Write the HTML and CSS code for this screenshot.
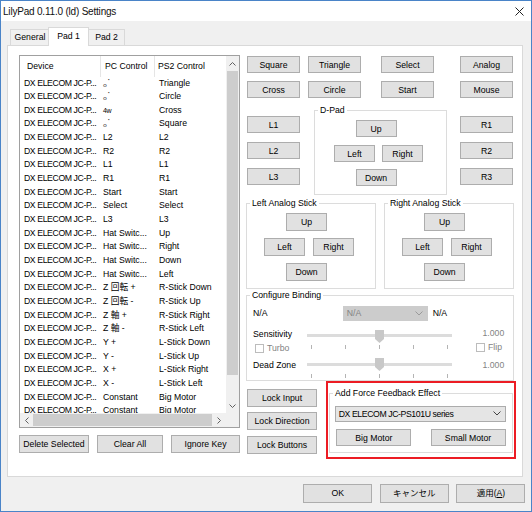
FILE: index.html
```html
<!DOCTYPE html>
<html lang="en">
<head>
  <meta charset="UTF-8">
  <title>LilyPad Settings</title>
  <link rel="stylesheet" href="styles.css">
</head>
<body>
<div class="window">
  <div class="titlebar">
    <span class="title">LilyPad 0.11.0 (ld) Settings</span>
    <svg class="close" width="9" height="9" viewBox="0 0 9 9"><path d="M0.5 0.5L8.5 8.5M8.5 0.5L0.5 8.5" stroke="#222" stroke-width="1"/></svg>
  </div>

  <div class="tabs">
    <div class="tab general">General</div>
    <div class="tab active">Pad 1</div>
    <div class="tab pad2">Pad 2</div>
  </div>

  <div class="panel">
    <div class="left">
      <div class="list">
        <div class="view">
          <div class="head">
            <span class="h1">Device</span>
            <span class="h2">PC Control</span>
            <span class="h3">PS2 Control</span>
          </div>
          <div class="row"><span class="dev">DX ELECOM JC-P...</span><span class="pc glyph">ₒ˙</span><span class="ps">Triangle</span></div>
          <div class="row"><span class="dev">DX ELECOM JC-P...</span><span class="pc glyph">ₒ˙</span><span class="ps">Circle</span></div>
          <div class="row"><span class="dev">DX ELECOM JC-P...</span><span class="pc"><small>4w</small></span><span class="ps">Cross</span></div>
          <div class="row"><span class="dev">DX ELECOM JC-P...</span><span class="pc glyph">ₒ˙</span><span class="ps">Square</span></div>
          <div class="row"><span class="dev">DX ELECOM JC-P...</span><span class="pc">L2</span><span class="ps">L2</span></div>
          <div class="row"><span class="dev">DX ELECOM JC-P...</span><span class="pc">R2</span><span class="ps">R2</span></div>
          <div class="row"><span class="dev">DX ELECOM JC-P...</span><span class="pc">L1</span><span class="ps">L1</span></div>
          <div class="row"><span class="dev">DX ELECOM JC-P...</span><span class="pc">R1</span><span class="ps">R1</span></div>
          <div class="row"><span class="dev">DX ELECOM JC-P...</span><span class="pc">Start</span><span class="ps">Start</span></div>
          <div class="row"><span class="dev">DX ELECOM JC-P...</span><span class="pc">Select</span><span class="ps">Select</span></div>
          <div class="row"><span class="dev">DX ELECOM JC-P...</span><span class="pc">L3</span><span class="ps">L3</span></div>
          <div class="row"><span class="dev">DX ELECOM JC-P...</span><span class="pc">Hat Switc...</span><span class="ps">Up</span></div>
          <div class="row"><span class="dev">DX ELECOM JC-P...</span><span class="pc">Hat Switc...</span><span class="ps">Right</span></div>
          <div class="row"><span class="dev">DX ELECOM JC-P...</span><span class="pc">Hat Switc...</span><span class="ps">Down</span></div>
          <div class="row"><span class="dev">DX ELECOM JC-P...</span><span class="pc">Hat Switc...</span><span class="ps">Left</span></div>
          <div class="row"><span class="dev">DX ELECOM JC-P...</span><span class="pc">Z 回転 +</span><span class="ps">R-Stick Down</span></div>
          <div class="row"><span class="dev">DX ELECOM JC-P...</span><span class="pc">Z 回転 -</span><span class="ps">R-Stick Up</span></div>
          <div class="row"><span class="dev">DX ELECOM JC-P...</span><span class="pc">Z 軸 +</span><span class="ps">R-Stick Right</span></div>
          <div class="row"><span class="dev">DX ELECOM JC-P...</span><span class="pc">Z 軸 -</span><span class="ps">R-Stick Left</span></div>
          <div class="row"><span class="dev">DX ELECOM JC-P...</span><span class="pc">Y +</span><span class="ps">L-Stick Down</span></div>
          <div class="row"><span class="dev">DX ELECOM JC-P...</span><span class="pc">Y -</span><span class="ps">L-Stick Up</span></div>
          <div class="row"><span class="dev">DX ELECOM JC-P...</span><span class="pc">X +</span><span class="ps">L-Stick Right</span></div>
          <div class="row"><span class="dev">DX ELECOM JC-P...</span><span class="pc">X -</span><span class="ps">L-Stick Left</span></div>
          <div class="row"><span class="dev">DX ELECOM JC-P...</span><span class="pc">Constant</span><span class="ps">Big Motor</span></div>
          <div class="row"><span class="dev">DX ELECOM JC-P...</span><span class="pc">Constant</span><span class="ps">Big Motor</span></div>
        </div>
        <div class="vscroll">
          <div class="arrow v-up"><svg width="7" height="4" viewBox="0 0 7 4"><polyline points="0.5,3.5 3.5,0.5 6.5,3.5" fill="none" stroke="#606060"/></svg></div>
          <div class="vthumb"></div>
          <div class="fill"></div>
          <div class="arrow v-down"><svg width="7" height="4" viewBox="0 0 7 4"><polyline points="0.5,0.5 3.5,3.5 6.5,0.5" fill="none" stroke="#606060"/></svg></div>
        </div>
        <div class="hscroll">
          <div class="arrow h-left"><svg width="4" height="7" viewBox="0 0 4 7"><polyline points="3.5,0.5 0.5,3.5 3.5,6.5" fill="none" stroke="#606060"/></svg></div>
          <div class="hthumb"></div>
          <div class="fill"></div>
          <div class="arrow h-right"><svg width="4" height="7" viewBox="0 0 4 7"><polyline points="0.5,0.5 3.5,3.5 0.5,6.5" fill="none" stroke="#606060"/></svg></div>
        </div>
        <div class="corner"></div>
      </div>
      <div class="list-buttons">
        <button class="btn del">Delete Selected</button>
        <button class="btn clr">Clear All</button>
        <button class="btn ign">Ignore Key</button>
      </div>
    </div>

    <div class="right">
      <div class="face">
        <button class="btn">Square</button>
        <button class="btn">Triangle</button>
        <button class="btn">Select</button>
        <button class="btn">Analog</button>
        <button class="btn">Cross</button>
        <button class="btn">Circle</button>
        <button class="btn">Start</button>
        <button class="btn">Mouse</button>
      </div>

      <div class="middle">
        <div class="side">
          <button class="btn">L1</button>
          <button class="btn">L2</button>
          <button class="btn">L3</button>
        </div>
        <fieldset class="group dpad">
          <legend>D-Pad</legend>
          <div class="dpad-body">
            <button class="btn wide">Up</button>
            <button class="btn">Left</button>
            <button class="btn">Right</button>
            <button class="btn wide">Down</button>
          </div>
        </fieldset>
        <div class="side r">
          <button class="btn">R1</button>
          <button class="btn">R2</button>
          <button class="btn">R3</button>
        </div>
      </div>

      <div class="sticks">
        <fieldset class="group stick">
          <legend>Left Analog Stick</legend>
          <div class="stick-body">
            <button class="btn wide">Up</button>
            <button class="btn">Left</button>
            <button class="btn">Right</button>
            <button class="btn wide">Down</button>
          </div>
        </fieldset>
        <fieldset class="group stick">
          <legend>Right Analog Stick</legend>
          <div class="stick-body">
            <button class="btn wide">Up</button>
            <button class="btn">Left</button>
            <button class="btn">Right</button>
            <button class="btn wide">Down</button>
          </div>
        </fieldset>
      </div>

      <fieldset class="group binding">
        <legend>Configure Binding</legend>
        <div class="bind-body">
          <div class="bind-top">
            <span class="na">N/A</span>
            <div class="combo off"><span>N/A</span><svg width="8" height="5" viewBox="0 0 8 5"><polyline points="0.5,0.5 4,4 7.5,0.5" fill="none" stroke="#9a9a9a"/></svg></div>
            <span class="na2">N/A</span>
          </div>
          <div class="bind-grid">
            <div class="cell-label">
              <div>Sensitivity</div>
              <div class="check"><i></i>Turbo</div>
            </div>
            <div class="slider">
              <div class="track"></div>
              <div class="ticks"><i></i><i></i><i></i><i></i><i></i></div>
              <svg class="thumb" width="9" height="13" viewBox="0 0 9 13"><polygon points="0,0 9,0 9,9 4.5,13 0,9" fill="#c8c8c8"/></svg>
            </div>
            <div class="cell-value">
              <div class="num">1.000</div>
              <div class="check flip"><i></i>Flip</div>
            </div>
            <div class="cell-label dz">Dead Zone</div>
            <div class="slider">
              <div class="track"></div>
              <div class="ticks"><i></i><i></i><i></i><i></i><i></i></div>
              <svg class="thumb" width="9" height="13" viewBox="0 0 9 13"><polygon points="0,0 9,0 9,9 4.5,13 0,9" fill="#c8c8c8"/></svg>
            </div>
            <div class="cell-value dz"><div class="num">1.000</div></div>
          </div>
        </div>
      </fieldset>

      <div class="bottom">
        <div class="locks">
          <button class="btn">Lock Input</button>
          <button class="btn">Lock Direction</button>
          <button class="btn">Lock Buttons</button>
        </div>
        <div class="highlight">
          <fieldset class="group force">
            <legend>Add Force Feedback Effect</legend>
            <div class="force-body">
              <div class="combo">
                <span class="dev">DX ELECOM JC-PS101U series</span>
                <svg width="8" height="5" viewBox="0 0 8 5"><polyline points="0.5,0.5 4,4 7.5,0.5" fill="none" stroke="#444"/></svg>
              </div>
              <div class="motors">
                <button class="btn">Big Motor</button>
                <button class="btn">Small Motor</button>
              </div>
            </div>
          </fieldset>
        </div>
      </div>
    </div>
  </div>

  <div class="dialog-buttons">
    <button class="btn">OK</button>
    <button class="btn jp">キャンセル</button>
    <button class="btn jp">適用(<u>A</u>)</button>
  </div>
</div>
</body>
</html>
```

FILE: styles.css
```css
* { box-sizing: border-box; }
body { margin: 0; background: #fff; font-family: "Liberation Sans", "Noto Sans CJK JP", sans-serif; font-size: 8.7px; color: #000; }

.window { width: 532px; height: 512px; border: 1px solid #4a84c8; background: #f0f0f0; }
.titlebar { height: 20px; background: #fff; display: flex; align-items: center; justify-content: space-between; padding: 0 7px 0 2px; }
.title { font-size: 10px; letter-spacing: -0.2px; color: #111; }

.tabs { height: 24px; display: flex; align-items: flex-end; padding-left: 9px; }
.tab { height: 16px; border: 1px solid #d9d9d9; border-bottom: none; line-height: 15px; text-align: center; background: #f0f0f0; }
.tab.general { width: 39px; border-right: none; }
.tab.active { width: 41px; height: 19.5px; margin-left: -1px; margin-bottom: -1px; line-height: 16px; background: #fff; position: relative; }
.tab.pad2 { width: 36px; border-left: none; }

.panel { margin-left: 6px; width: 516px; height: 432px; border: 1px solid #d9d9d9; background: #fff; padding: 9px 0 0 11px; display: flex; gap: 6px; }
.left { width: 221px; }
.right { width: 270px; }

.btn { display: block; margin: 0; padding: 0; height: 18px; border: 1px solid #adadad; background: #e1e1e1; font: inherit; color: #000; text-align: center; line-height: 16px; white-space: nowrap; }

/* binding list */
.list { height: 373px; border: 1px solid #a0a0a0; display: grid; grid-template-columns: 206px 13px; grid-template-rows: 357px 14px; }
.view { overflow: hidden; }
.head, .row { display: grid; grid-template-columns: 81px 54px 1fr; white-space: nowrap; }
.head { height: 20.5px; line-height: 20px; }
.head span { border-right: 1px solid #e5e5e5; }
.head .h1 { padding-left: 7px; }
.head .h2 { padding-left: 4px; }
.head .h3 { padding-left: 3px; border-right: none; }
.row { height: 13.67px; line-height: 13.67px; }
.row span { overflow: hidden; }
.row .dev { padding-left: 4px; }
.row .pc { padding-left: 2px; }
.row .ps { padding-left: 4px; }
.dev { letter-spacing: -0.4px; }
.glyph { font-family: "DejaVu Sans", sans-serif; font-size: 10px; letter-spacing: -1px; color: #333; }
.row small { font-size: 7px; letter-spacing: -0.3px; }

.vscroll { background: #f0f0f0; display: flex; flex-direction: column; }
.hscroll { background: #f0f0f0; display: flex; }
.corner { background: #f0f0f0; }
.arrow { display: flex; align-items: center; justify-content: center; flex: none; }
.v-up { height: 15px; }
.v-down { height: 14px; }
.vthumb { height: 304px; margin: 0 1px; background: #cdcdcd; }
.fill { flex: 1; }
.h-left { width: 13px; }
.h-right { width: 14px; }
.hthumb { width: 179px; margin: 1px 0; background: #cdcdcd; }

.list-buttons { display: flex; justify-content: space-between; margin-top: 7px; }
.del { width: 70px; }
.clr { width: 66px; }
.ign { width: 69px; }

/* pad buttons */
.face { display: grid; grid-template-columns: 61px 73px 79px 53px; row-gap: 8px; margin: 1px 0 0 1px; }
.face .btn { width: 53px; height: 17px; }

.group { margin: 0; padding: 0; min-width: 0; border: 1px solid #dcdcdc; }
.group legend { padding: 0 2px; margin-left: 3px; line-height: 11px; }

.middle { display: flex; align-items: flex-start; margin-top: 6.5px; }
.side { width: 53px; margin-left: 1px; padding-top: 11.5px; display: flex; flex-direction: column; gap: 9px; }
.side .btn { height: 17px; }
.side.r { margin-left: 13px; }
.dpad { width: 133px; margin-left: 14px; }
.dpad-body { display: grid; grid-template-columns: 41px 41px; gap: 7.5px 7px; padding: 4.5px 0 8px 19px; }
.dpad-body .btn { height: 17px; }
.wide { grid-column: 1 / 3; justify-self: center; width: 41px; margin-right: 5px; }

.sticks { display: flex; gap: 8px; margin-top: 2.8px; }
.stick { width: 130px; }
.stick-body { display: grid; grid-template-columns: 41px 41px; gap: 7px 8px; padding: 4px 0 7px 17px; }

/* configure binding */
.binding { width: 268px; margin-top: 1.4px; }
.bind-body { padding: 4.5px 0 2px 6px; }
.bind-top { display: flex; align-items: center; height: 15px; }
.na { width: 89.7px; }
.na2 { margin-left: 4.4px; }
.combo { display: flex; align-items: center; justify-content: space-between; height: 16px; padding: 0 4px 0 3px; border: 1px solid #acacac; background: #e5e5e5; white-space: nowrap; }
.combo.off { width: 85.6px; height: 15px; border-color: #cccccc; background: #cccccc; color: #838383; }
.bind-grid { display: grid; grid-template-columns: 53.7px 145.3px 52.3px; grid-template-rows: 28.5px 19.5px; margin-top: 9.3px; line-height: 11px; }
.cell-label { margin-top: -1px; }
.cell-label.dz { margin-top: 2px; }
.cell-value { text-align: right; color: #838383; margin-top: -1.5px; }
.cell-value.dz { margin-top: 1.2px; }
.check { display: flex; align-items: center; gap: 3px; margin-top: 3.5px; padding-left: 2px; color: #838383; }
.check i { width: 9px; height: 9px; border: 1px solid #bcbcbc; background: #fff; }
.check.flip { margin-top: 2.5px; padding-left: 24px; }
.slider { position: relative; }
.track { margin-top: 4.2px; height: 3px; background: #dcdcdc; }
.ticks { display: flex; justify-content: space-between; height: 4px; margin-top: 8px; padding: 0 3.5px 0 4.3px; }
.ticks i { width: 1px; background: #b4b4b4; }
.thumb { position: absolute; left: 68.3px; top: 0; }

/* lock buttons and force feedback */
.bottom { display: flex; }
.locks { width: 70px; margin-left: 1px; padding-top: 8px; display: flex; flex-direction: column; gap: 5.3px; }
.highlight { width: 190px; margin-left: 9px; border: 2px solid #ec1c24; padding: 5px 1.5px 3.6px 1px; }
.force-body { padding: 7px 5.3px 6px 4.7px; }
.motors { display: flex; justify-content: space-between; margin-top: 7.3px; padding: 0 0.7px 0 1.7px; }
.motors .btn { width: 75px; height: 17px; }

.dialog-buttons { display: flex; justify-content: flex-end; gap: 7.5px; padding: 7.3px 5.7px 0 0; }
.dialog-buttons .btn { width: 69px; height: 19px; line-height: 17px; }
.jp { font-size: 8.5px; }
```
